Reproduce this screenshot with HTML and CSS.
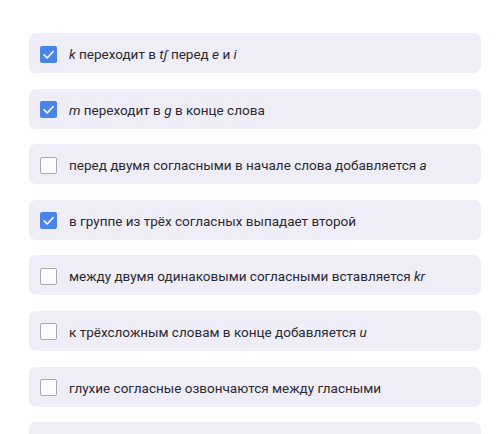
FILE: index.html
```html
<!DOCTYPE html>
<html lang="ru">
<head>
<meta charset="utf-8">
<link rel="stylesheet" href="styles.css">
</head>
<body>
<ul class="list">
  <li class="card"><span class="box checked"><svg viewBox="0 0 17 17"><path d="M4 8.8 L7.2 12 L13.2 5.5" /></svg></span><span class="label"><i>k</i> переходит в <i>tʃ</i> перед <i>e</i> и <i>i</i></span></li>
  <li class="card"><span class="box checked"><svg viewBox="0 0 17 17"><path d="M4 8.8 L7.2 12 L13.2 5.5" /></svg></span><span class="label"><i>m</i> переходит в <i>g</i> в конце слова</span></li>
  <li class="card"><span class="box"></span><span class="label">перед двумя согласными в начале слова добавляется <i>a</i></span></li>
  <li class="card"><span class="box checked"><svg viewBox="0 0 17 17"><path d="M4 8.8 L7.2 12 L13.2 5.5" /></svg></span><span class="label">в группе из трёх согласных выпадает второй</span></li>
  <li class="card"><span class="box"></span><span class="label">между двумя одинаковыми согласными вставляется <i>kr</i></span></li>
  <li class="card"><span class="box"></span><span class="label">к трёхсложным словам в конце добавляется <i>u</i></span></li>
  <li class="card"><span class="box"></span><span class="label">глухие согласные озвончаются между гласными</span></li>
  <li class="card"><span class="label"></span></li>
</ul>
</body>
</html>
```

FILE: styles.css
```css
html, body {
  margin: 0;
  padding: 0;
  background: #ffffff;
}
body {
  width: 500px;
  height: 434px;
  overflow: hidden;
  font-family: Roboto, "Liberation Sans", sans-serif;
}
.list {
  list-style: none;
  margin: 0;
  padding: 33px 19px 0 29px;
  display: flex;
  flex-direction: column;
  gap: 15.6px;
  height: 434px;
  box-sizing: border-box;
  overflow: hidden;
}
.card {
  height: 40px;
  box-sizing: border-box;
  background: #efedf8;
  border-radius: 7px;
  display: flex;
  align-items: center;
  padding: 2px 0 0 11px;
  flex-shrink: 0;
}
.box {
  width: 17px;
  height: 17px;
  box-sizing: border-box;
  border: 1.5px solid #a9a8ae;
  border-radius: 2px;
  background: #fbfbfd;
  flex-shrink: 0;
  margin-right: 12px;
  display: flex;
}
.box.checked {
  border: none;
  background: #4a84e6;
}
.box svg {
  width: 17px;
  height: 17px;
}
.box path {
  fill: none;
  stroke: #ffffff;
  stroke-width: 1.6;
  stroke-linecap: round;
  stroke-linejoin: round;
}
.label {
  font-size: 13.5px;
  color: #2a2a30;
  white-space: nowrap;
}
.label i {
  font-style: italic;
}
```
